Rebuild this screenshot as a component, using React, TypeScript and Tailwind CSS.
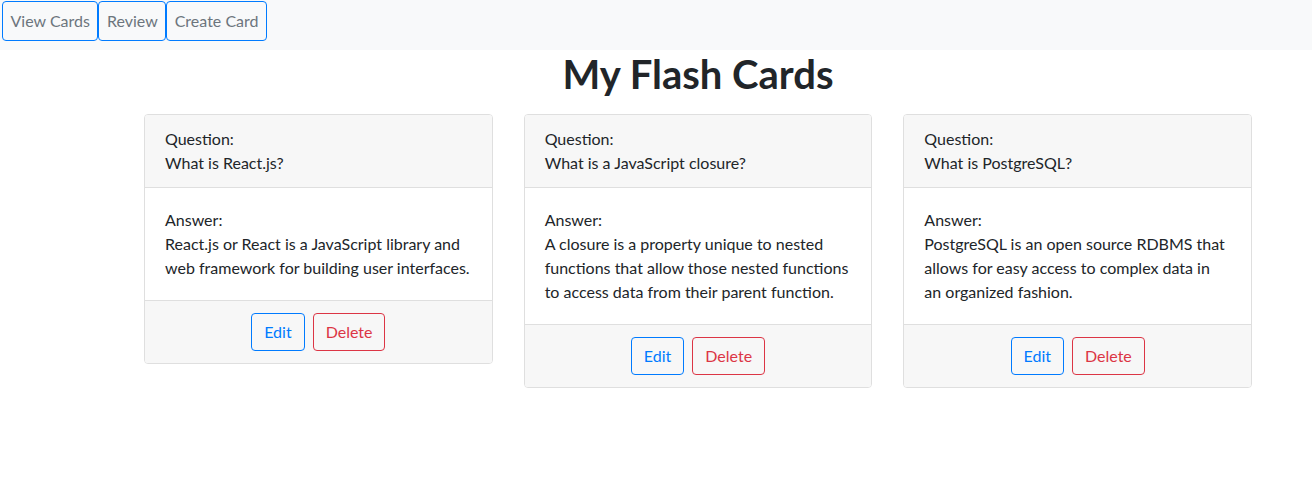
const cards = [
  {
    question: 'What is React.js?',
    answer: 'React.js or React is a JavaScript library and web framework for building user interfaces.',
  },
  {
    question: 'What is a JavaScript closure?',
    answer:
      'A closure is a property unique to nested functions that allow those nested functions to access data from their parent function.',
  },
  {
    question: 'What is PostgreSQL?',
    answer: 'PostgreSQL is an open source RDBMS that allows for easy access to complex data in an organized fashion.',
  },
]

function FlashCard({ question, answer }: { question: string; answer: string }) {
  return (
    <div className="border border-[#dfdfdf] rounded-[4px] bg-white overflow-hidden">
      {/* header */}
      <div className="bg-[#f7f7f7] border-b border-[#dfdfdf] px-5 py-3">
        <div>Question:</div>
        <div>{question}</div>
      </div>
      {/* body */}
      <div className="p-5">
        <div>Answer:</div>
        <div className="pr-[2px]">{answer}</div>
      </div>
      {/* footer */}
      <div className="bg-[#f7f7f7] border-t border-[#dfdfdf] px-5 py-3 flex justify-center gap-2">
        <button className="border border-[#007bff] text-[#007bff] rounded-[4px] px-3 py-[6px] leading-6">
          Edit
        </button>
        <button className="border border-[#dc3545] text-[#dc3545] rounded-[4px] px-3 py-[6px] leading-6">
          Delete
        </button>
      </div>
    </div>
  )
}

export default function App() {
  const navItems = ['View Cards', 'Review', 'Create Card']

  return (
    <div className="min-h-[480px] bg-white text-[#212529] text-base leading-6 font-['Lato',sans-serif]">
      {/* top nav */}
      <nav className="h-[50px] bg-[#f8f9fa] flex items-start pt-px pl-[2px]">
        {navItems.map((item) => (
          <button
            key={item}
            className="border border-[#007bff] rounded-[4px] text-[#6c757d] px-[7.5px] py-[7px] leading-6"
          >
            {item}
          </button>
        ))}
      </nav>

      <div className="ml-[128px] w-[1140px]">
        <h1 className="text-[40px] leading-[48px] font-bold text-center mb-4">My Flash Cards</h1>
        <div className="grid grid-cols-3 gap-[31px] px-4 items-start">
          {cards.map((c) => (
            <FlashCard key={c.question} question={c.question} answer={c.answer} />
          ))}
        </div>
      </div>
    </div>
  )
}
